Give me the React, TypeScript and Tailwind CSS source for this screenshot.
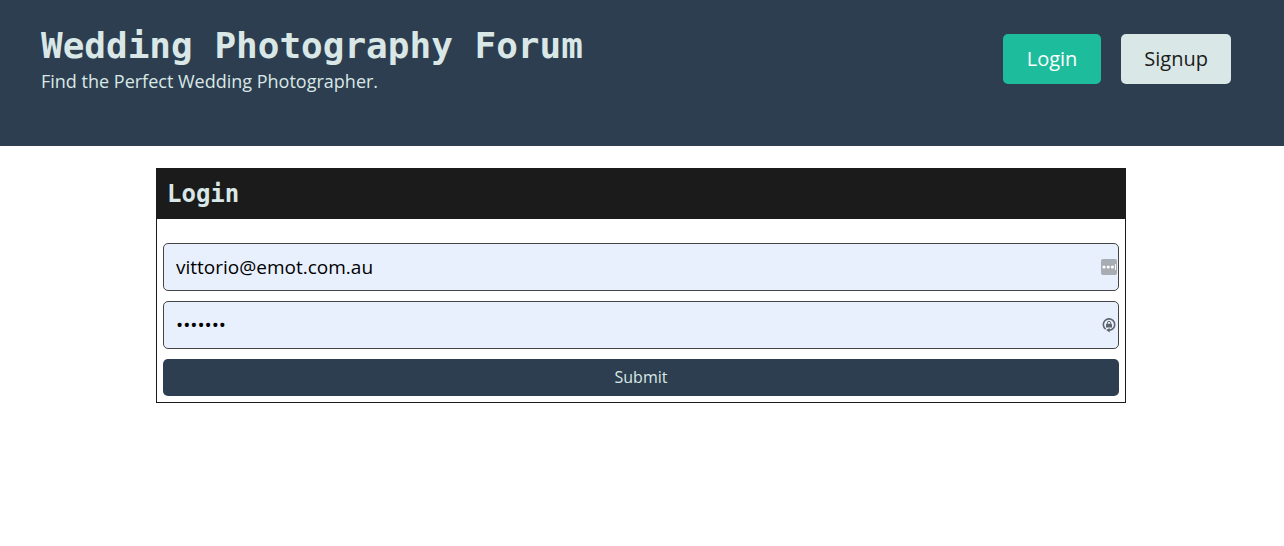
import { useState } from "react";

function PasswordManagerIcon() {
  return (
    <svg width="16" height="16" viewBox="0 0 16 16" aria-hidden="true">
      <rect width="16" height="16" rx="2" fill="#a8acb3" />
      <circle cx="3" cy="8" r="1.6" fill="#fff" />
      <circle cx="7.2" cy="8" r="1.6" fill="#fff" />
      <circle cx="11.4" cy="8" r="1.6" fill="#fff" />
      <path d="M14.5 5v6" stroke="#fff" strokeWidth="0.9" />
    </svg>
  );
}

function GeneratePasswordIcon() {
  return (
    <svg width="16" height="16" viewBox="0 0 16 16" fill="none" aria-hidden="true">
      <path d="M4.6 12.1A5.7 5.7 0 1 1 12 11.6C11 12.7 9.9 13.1 8 13.1" stroke="#5f646c" strokeWidth="1.6" />
      <path d="M8.6 10.9v4.6L5.2 13.1z" fill="#5f646c" />
      <rect x="5" y="6.8" width="6" height="3.8" rx="0.4" fill="#5f646c" />
      <path d="M6.4 6.9V5.9a1.6 1.6 0 0 1 3.2 0v1" stroke="#5f646c" strokeWidth="1" />
    </svg>
  );
}

const fieldClass =
  "block h-12 w-full rounded-[5px] border border-[#444] bg-[#e8f0fe] pr-8 pl-3 text-[19px] text-black outline-none";

export default function App() {
  const [email, setEmail] = useState("vittorio@emot.com.au");
  const [password, setPassword] = useState("wedding");

  return (
    <div className="min-h-screen bg-white font-['Open_Sans',sans-serif]">
      <header className="flex items-start justify-between bg-[#2d3e50] pt-6 pr-[53px] pb-[52px] pl-[41px] text-[#d9e8e6]">
        <div>
          <h1 className="font-['DejaVu_Sans_Mono',monospace] text-4xl leading-[44px] font-bold">
            Wedding Photography Forum
          </h1>
          <p className="text-lg leading-[26px]">Find the Perfect Wedding Photographer.</p>
        </div>
        <nav className="mt-[10px] flex gap-5 text-xl leading-[30px]">
          <a href="#login" className="rounded-[5px] bg-[#1dbc9c] px-6 py-[10px] text-white">
            Login
          </a>
          <a href="#signup" className="rounded-[5px] bg-[#d9e8e6] px-[23px] py-[10px] text-[#1b1b1b]">
            Signup
          </a>
        </nav>
      </header>

      <div className="pt-[22px] pr-[2px]">
        <main id="login" className="mx-auto max-w-[970px] border border-[#1b1b1b]">
          <h2 className="bg-[#1b1b1b] px-[10px] py-2 font-['DejaVu_Sans_Mono',monospace] text-2xl leading-[34px] font-bold text-[#d9e8e6]">
            Login
          </h2>
          <form className="flex flex-col gap-[10px] px-[6px] pt-6 pb-[6px]" onSubmit={(e) => e.preventDefault()}>
            <div className="relative">
              <input
                type="email"
                aria-label="Email"
                value={email}
                onChange={(e) => setEmail(e.target.value)}
                className={fieldClass}
              />
              <span className="absolute inset-y-0 right-[2px] flex items-center">
                <PasswordManagerIcon />
              </span>
            </div>
            <div className="relative">
              <input
                type="password"
                aria-label="Password"
                value={password}
                onChange={(e) => setPassword(e.target.value)}
                className={fieldClass}
              />
              <span className="absolute inset-y-0 right-[2px] flex items-center">
                <GeneratePasswordIcon />
              </span>
            </div>
            <button type="submit" className="rounded-[5px] bg-[#2d3e50] pt-1.5 pb-[7px] text-base leading-6 text-[#d9e8e6]">
              Submit
            </button>
          </form>
        </main>
      </div>
    </div>
  );
}
